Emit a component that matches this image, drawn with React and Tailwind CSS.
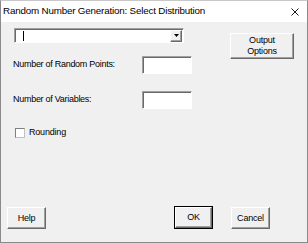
import React from 'react';

const raised =
  'bg-[#f0f0f0] border border-t-white border-l-white border-r-[#696969] border-b-[#696969] shadow-[inset_-1px_-1px_0_#a0a0a0]';

const sunken =
  'bg-white border border-t-[#a0a0a0] border-l-[#a0a0a0] border-r-white border-b-white shadow-[inset_1px_1px_0_#696969]';

const Button = ({ children, className = '' }) => (
  <button className={`${raised} flex items-center justify-center text-[9px] leading-[11px] tracking-[-0.2px] text-black ${className}`}>
    {children}
  </button>
);

const Field = ({ label, className = '' }) => (
  <div className={`flex items-center justify-between h-[18px] ${className}`}>
    <span className="text-[9px] tracking-[-0.28px] text-black whitespace-nowrap">{label}</span>
    <div className={`${sunken} w-[50px] h-[18px]`} />
  </div>
);

export default function App() {
  return (
    <div
      className="w-[308px] h-[243px] flex flex-col border border-t-[#c8c8c8] border-l-[#8a8a8a] border-r-[#8a8a8a] border-b-[#8a8a8a] bg-[#f0f0f0]"
      style={{ fontFamily: '"Liberation Sans", Arial, sans-serif' }}
    >
      {/* Title bar */}
      <div className="h-[21px] bg-white flex items-center justify-between pl-[2px] pr-[8px]">
        <span className="text-[9.8px] tracking-[-0.18px] text-black whitespace-nowrap">
          Random Number Generation: Select Distribution
        </span>
        <svg width="8" height="8" viewBox="0 0 8 8" className="text-black">
          <path d="M0.5 0.5 L7.5 7.5 M7.5 0.5 L0.5 7.5" stroke="currentColor" strokeWidth="0.9" />
        </svg>
      </div>

      {/* Body */}
      <div className="flex-1 flex flex-col pt-[6px] pb-[13px]">
        <div className="flex">
          <div className="w-[179px] ml-[12px] flex flex-col">
            {/* Combo box */}
            <div className={`${sunken} ml-[1px] w-[170px] h-[15px] flex items-center justify-between pl-[8px] pr-[1px]`}>
              <span className="w-px h-[10px] bg-black" />
              <div className={`${raised} w-[12px] h-[12px] flex items-center justify-center`}>
                <svg width="5" height="3" viewBox="0 0 5 3">
                  <path d="M0 0 H5 L2.5 3 Z" fill="#000" />
                </svg>
              </div>
            </div>

            <Field label="Number of Random Points:" className="mt-[13px]" />
            <Field label="Number of Variables:" className="mt-[17px]" />

            {/* Rounding */}
            <label className="flex items-center mt-[17px] ml-[2px] gap-[4px]">
              <span className="w-[10px] h-[10px] bg-white border border-t-[#808080] border-l-[#808080] border-r-[#c0c0c0] border-b-[#c0c0c0]" />
              <span className="text-[9px] tracking-[-0.2px] text-black">Rounding</span>
            </label>
          </div>

          <Button className="ml-[38px] mt-[5px] w-[64px] h-[26px] flex-col">
            <span>Output</span>
            <span>Options</span>
          </Button>
        </div>

        <div className="flex-1" />

        {/* Footer buttons */}
        <div className="flex items-end">
          <Button className="ml-[6px] w-[39px] h-[22px] text-[#3a86e0]">Help</Button>
          <div className="ml-auto w-[39px] h-[23px] border border-black flex">
            <Button className="flex-1">OK</Button>
          </div>
          <Button className="ml-[18px] mr-[37px] w-[39px] h-[22px]">Cancel</Button>
        </div>
      </div>
    </div>
  );
}
